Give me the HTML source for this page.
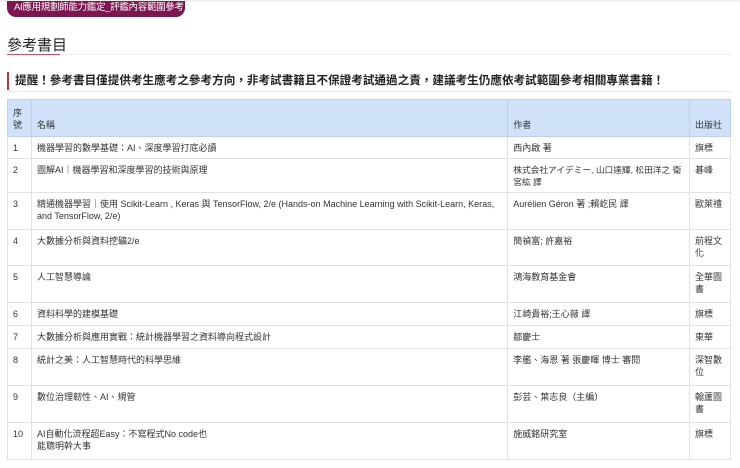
<!DOCTYPE html>
<html><head><meta charset="utf-8"><style>
*{margin:0;padding:0;box-sizing:border-box}
body{width:740px;height:468px;background:#fff;font-family:"Liberation Sans","Noto Sans CJK TC",sans-serif;color:#222;position:relative;overflow:hidden}
.top{position:absolute;left:0;top:0;width:740px;height:2px;background:#f0f0f0}
.pill{position:absolute;left:7px;top:1px;width:178px;height:16px;background:#7b1650;color:#fff;font-size:9.5px;line-height:14px;border-radius:0 0 9px 9px;padding-left:7px;white-space:nowrap;overflow:hidden;letter-spacing:-0.3px}
h2{position:absolute;left:7px;top:34px;font-size:15px;font-weight:normal;color:#222}
.ul{position:absolute;left:7px;top:54px;width:53px;height:1px;background:#d44a6a}
.gl{position:absolute;left:60px;top:54px;width:672px;height:1px;background:#eee}
.alert{position:absolute;left:7px;top:72px;height:18px;border-left:2px solid #c8323c;padding-left:6px;font-size:11.6px;font-weight:bold;line-height:18px;color:#222;white-space:nowrap}
.gl2{position:absolute;left:7px;top:91px;width:725px;height:1px;background:#eee}
table{position:absolute;left:7px;top:99px;width:724px;border-collapse:collapse;font-size:9px;color:#333}
td,th{border:1px solid #e2e2e2;vertical-align:top;padding:5px 4px 0 5px;text-align:left;font-weight:normal;line-height:12px}
th{background:#cfe2fa;border-color:#b9d3f2;vertical-align:bottom;padding-bottom:5px}
</style></head><body>
<div class="top"></div>
<div class="pill">AI應用規劃師能力鑑定_評鑑內容範圍參考</div>
<h2>參考書目</h2><div class="ul"></div><div class="gl"></div>
<div class="alert">提醒！參考書目僅提供考生應考之參考方向，非考試書籍且不保證考試通過之責，建議考生仍應依考試範圍參考相關專業書籍！</div>
<div class="gl2"></div>
<table>
<colgroup><col style="width:24px"><col style="width:477px"><col style="width:182px"><col style="width:41px"></colgroup>
<tr style="height:37px"><th>序<br>號</th><th>名稱</th><th>作者</th><th>出版社</th></tr>
<tr style="height:22px"><td>1</td><td>機器學習的數學基礎：AI、深度學習打底必讀</td><td>西內啟 著</td><td>旗標</td></tr>
<tr style="height:34px"><td>2</td><td>圖解AI｜機器學習和深度學習的技術與原理</td><td style="font-size:8.7px">株式会社アイデミー, 山口達輝, 松田洋之 衛<br>宮紘 譯</td><td>碁峰</td></tr>
<tr style="height:37px"><td>3</td><td>精通機器學習｜使用 Scikit-Learn , Keras 與 TensorFlow, 2/e (Hands-on Machine Learning with Scikit-Learn, Keras,<br>and TensorFlow, 2/e)</td><td>Aurélien Géron 著 ;賴屹民 譯</td><td>歐萊禮</td></tr>
<tr style="height:36px"><td>4</td><td>大數據分析與資料挖礦2/e</td><td>簡禎富; 許嘉裕</td><td>前程文化</td></tr>
<tr style="height:37px"><td>5</td><td>人工智慧導論</td><td>鴻海教育基金會</td><td>全華圖書</td></tr>
<tr style="height:23px"><td>6</td><td>資料科學的建模基礎</td><td>江崎貴裕;王心薇 譯</td><td>旗標</td></tr>
<tr style="height:23px"><td>7</td><td>大數據分析與應用實戰：統計機器學習之資料導向程式設計</td><td>鄒慶士</td><td>東華</td></tr>
<tr style="height:37px"><td>8</td><td>統計之美：人工智慧時代的科學思維</td><td>李艦、海恩 著 張慶暉 博士 審閱</td><td>深智數位</td></tr>
<tr style="height:37px"><td>9</td><td>數位治理韌性、AI、規管</td><td>彭芸、葉志良（主編）</td><td>翰蘆圖書</td></tr>
<tr style="height:37px"><td>10</td><td>AI自動化流程超Easy：不寫程式No code也<br>能聰明幹大事</td><td>施威銘研究室</td><td>旗標</td></tr>
</table>
</body></html>
